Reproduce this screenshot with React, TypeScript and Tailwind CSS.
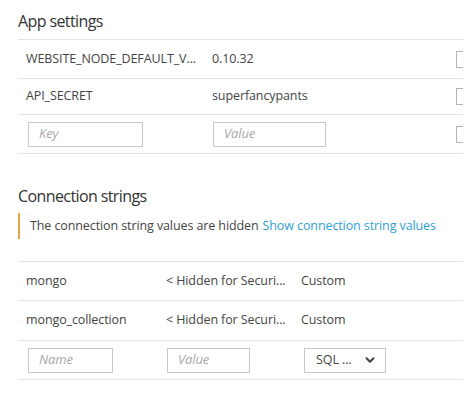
import { ChevronDown } from 'lucide-react'

const appSettings = [
  { key: 'WEBSITE_NODE_DEFAULT_V...', value: '0.10.32', h: 'h-[39px]' },
  { key: 'API_SECRET', value: 'superfancypants', h: 'h-[36px]' },
]

const connections = [
  { name: 'mongo', value: '< Hidden for Securi...', type: 'Custom', h: 'h-[39px]' },
  { name: 'mongo_collection', value: '< Hidden for Securi...', type: 'Custom', h: 'h-[40px]' },
]

function Checkbox() {
  return <div className="h-[17px] w-[16px] shrink-0 border border-[#b4b4b4] bg-white" />
}

function TextBox({ placeholder, width }: { placeholder: string; width: string }) {
  return (
    <div className={`${width} flex h-[25px] items-center border border-[#c9c9c9] px-[10px] text-[13px] italic text-[#a8a8a8]`}>
      {placeholder}
    </div>
  )
}

export default function App() {
  return (
    <div className="h-[394px] w-[474px] bg-white font-['Open_Sans',sans-serif] text-[12.5px] tracking-[-0.1px] text-[#444]">
      <div className="ml-[18px] w-[445px] overflow-hidden">
        {/* App settings */}
        <h2 className="h-[39px] pt-[10px] text-[16px] leading-[22px] tracking-[-0.6px] text-[#333]">App settings</h2>
        <div className="border-t border-[#e2e2e2]">
          {appSettings.map((row) => (
            <div key={row.key} className={`${row.h} flex items-center border-b border-[#e2e2e2] pl-2`}>
              <div className="w-[186px] shrink-0 whitespace-nowrap">{row.key}</div>
              <div className="w-[244px] shrink-0 whitespace-nowrap">{row.value}</div>
              <Checkbox />
            </div>
          ))}
          <div className="flex h-[39px] items-center border-b border-[#e2e2e2] pl-[10px]">
            <div className="w-[185px] shrink-0">
              <TextBox placeholder="Key" width="w-[115px]" />
            </div>
            <div className="w-[243px] shrink-0">
              <TextBox placeholder="Value" width="w-[113px]" />
            </div>
            <Checkbox />
          </div>
        </div>

        {/* Connection strings */}
        <h2 className="mt-[31px] h-[28px] text-[16px] leading-[22px] tracking-[-0.6px] text-[#333]">Connection strings</h2>
        <div className="flex h-[26px] items-center border-l-2 border-[#e9a54a] pl-[10px] whitespace-nowrap">
          <span>The connection string values are hidden</span>
          <span className="ml-[4px] text-[#2f9fd8]">Show connection string values</span>
        </div>
        <div className="mt-[22px] border-t border-[#e2e2e2]">
          {connections.map((row) => (
            <div key={row.name} className={`${row.h} flex items-center border-b border-[#e2e2e2] pl-2`}>
              <div className="w-[140px] shrink-0 whitespace-nowrap">{row.name}</div>
              <div className="w-[135px] shrink-0 whitespace-nowrap">{row.value}</div>
              <div className="whitespace-nowrap">{row.type}</div>
            </div>
          ))}
          <div className="flex h-[39px] items-center border-b border-[#e2e2e2] pl-[10px]">
            <div className="w-[139px] shrink-0">
              <TextBox placeholder="Name" width="w-[85px]" />
            </div>
            <div className="w-[137px] shrink-0">
              <TextBox placeholder="Value" width="w-[83px]" />
            </div>
            <div className="flex h-[25px] w-[82px] items-center justify-between border border-[#c9c9c9] pl-[11px] pr-[8px] text-[#444]">
              <span>SQL ...</span>
              <ChevronDown className="h-[14px] w-[14px]" strokeWidth={3.5} />
            </div>
          </div>
        </div>
      </div>
    </div>
  )
}
